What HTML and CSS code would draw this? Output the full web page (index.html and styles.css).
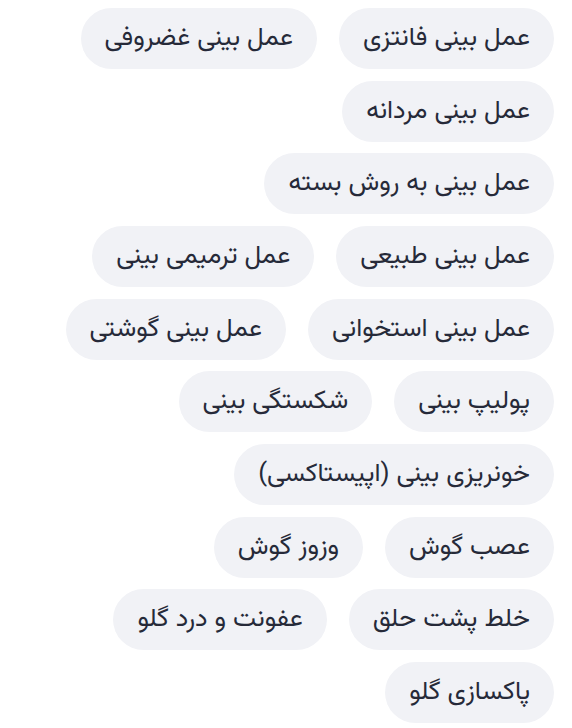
FILE: index.html
```html
<!DOCTYPE html>
<html lang="fa" dir="rtl">
<head>
<meta charset="utf-8">
<link rel="stylesheet" href="styles.css">
</head>
<body>
<div class="tags">
  <div class="row"><span class="tag">عمل بینی فانتزی</span><span class="tag">عمل بینی غضروفی</span></div>
  <div class="row"><span class="tag">عمل بینی مردانه</span></div>
  <div class="row"><span class="tag">عمل بینی به روش بسته</span></div>
  <div class="row"><span class="tag">عمل بینی طبیعی</span><span class="tag">عمل ترمیمی بینی</span></div>
  <div class="row"><span class="tag">عمل بینی استخوانی</span><span class="tag">عمل بینی گوشتی</span></div>
  <div class="row"><span class="tag">پولیپ بینی</span><span class="tag">شکستگی بینی</span></div>
  <div class="row"><span class="tag">خونریزی بینی (اپیستاکسی)</span></div>
  <div class="row"><span class="tag">عصب گوش</span><span class="tag">وزوز گوش</span></div>
  <div class="row"><span class="tag">خلط پشت حلق</span><span class="tag">عفونت و درد گلو</span></div>
  <div class="row"><span class="tag">پاکسازی گلو</span></div>
</div>
</body>
</html>
```
FILE: styles.css
```css
html, body {
  margin: 0;
  padding: 0;
  background: #ffffff;
}
.tags {
  direction: rtl;
  display: flex;
  flex-direction: column;
  gap: 11.67px;
  padding: 8px 18px 0 18px;
  font-family: "Vazirmatn", "Noto Sans Arabic", "DejaVu Sans", sans-serif;
}
.row {
  display: flex;
  gap: 22px;
}
.tag {
  display: inline-block;
  background: #f1f2f6;
  color: #262a39;
  border-radius: 31px;
  padding: 0 24px;
  height: 61px;
  line-height: 61px;
  font-size: 26px;
  font-weight: 400;
  white-space: nowrap;
}
```
